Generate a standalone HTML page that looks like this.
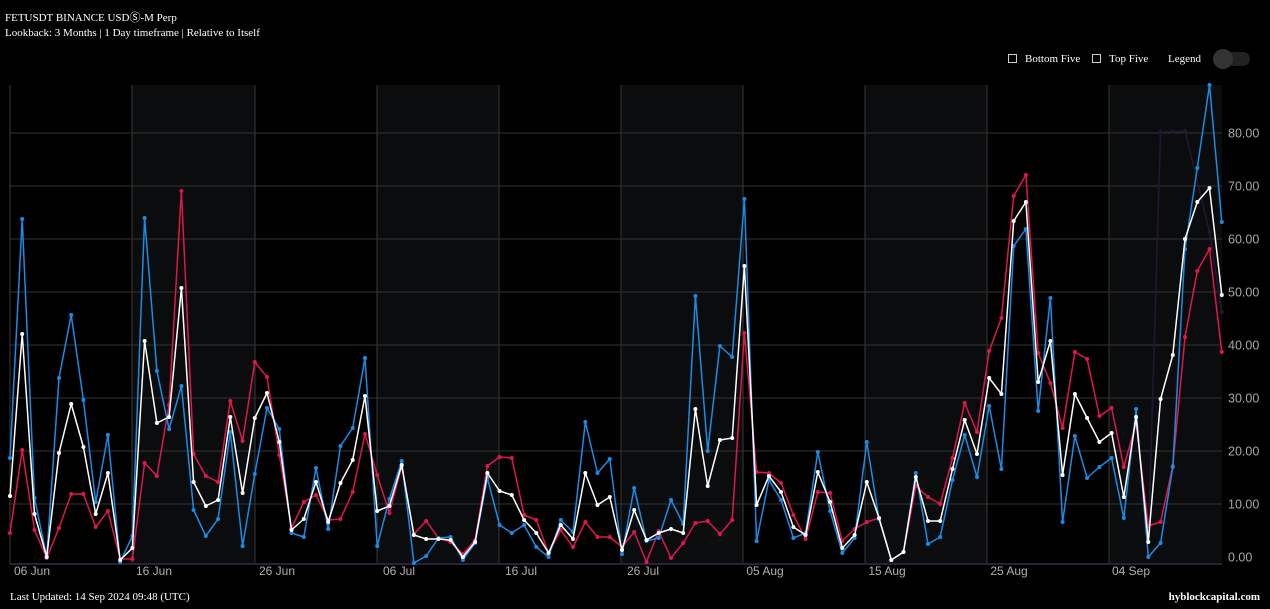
<!DOCTYPE html>
<html><head><meta charset="utf-8"><style>
html,body{margin:0;padding:0;background:#000;width:1270px;height:609px;overflow:hidden}
.t{position:absolute;color:#fff;font-family:"Liberation Serif",serif;font-size:11px;white-space:nowrap}
svg{position:absolute;left:0;top:0}
</style></head><body>
<div class="t" style="left:5px;top:9px">FETUSDT BINANCE USDⓈ-M Perp</div>
<div class="t" style="left:5px;top:27px">Lookback: 3 Months | 1 Day timeframe | Relative to Itself</div>
<div class="t" style="left:1008px;top:53px"><span style="display:inline-block;width:7px;height:7px;border:1px solid #ccc;vertical-align:-1px;margin-right:8px"></span>Bottom Five</div>
<div class="t" style="left:1092px;top:53px"><span style="display:inline-block;width:7px;height:7px;border:1px solid #ccc;vertical-align:-1px;margin-right:8px"></span>Top Five</div>
<div class="t" style="left:1168px;top:53px">Legend</div>
<div style="position:absolute;left:1214px;top:52px;width:36px;height:14px;border-radius:7px;background:#222"></div>
<div style="position:absolute;left:1213px;top:49px;width:20px;height:20px;border-radius:10px;background:#333"></div>
<div class="t" style="left:10px;top:591px">Last Updated: 14 Sep 2024 09:48 (UTC)</div>
<div class="t" style="right:10px;top:591px;font-weight:bold">hyblockcapital.com</div>
<svg id="s" width="1270" height="609" xmlns="http://www.w3.org/2000/svg"></svg>
<script>
var B=[458,219,498,557,378,315,400,502,435,562,536,218,371,429,386,510,536,519,432,546,474,408,429,533,537,468,529,446,428,358,546,499,461,563,556,538,537,560,543,478,525,533,525,547,557,520,532,422,473,459,554,488,541,538,500,524,296,451,346,357,199,541,480,500,538,533,452,511,553,538,442,519,560,552,473,544,537,480,435,477,406,469,246,229,411,298,522,436,478,467,458,518,409,557,543,467,249,168,85,222];
var W=[496,334,514,557,453,404,447,514,473,560,548,341,423,417,288,482,506,500,417,493,418,393,442,530,519,482,522,483,460,396,511,506,465,535,539,539,540,557,542,473,491,495,520,533,553,525,539,473,505,497,550,510,540,533,529,533,409,486,440,438,266,505,476,492,527,535,472,502,548,535,482,518,560,552,477,521,521,469,420,454,378,394,221,202,382,341,475,394,418,442,433,497,417,542,399,355,239,202,188,295];
var R=[533,450,530,558,528,494,494,527,511,559,559,463,476,405,191,454,476,482,401,441,362,377,455,528,502,495,520,519,492,434,475,513,466,534,521,538,542,554,540,466,457,458,515,520,553,530,547,522,537,537,547,532,562,531,558,543,523,521,534,520,333,472,473,483,515,539,492,493,541,529,522,518,560,552,486,497,504,458,403,432,351,318,196,175,353,383,428,352,359,416,408,467,423,526,522,466,337,271,249,352];
function X(i){return 10+i*12.24}
var h='';
var gx=[10,132,255,377,499,621,743,865,987,1109,1222];
for(var k=0;k<gx.length-1;k++){h+='<rect x="'+gx[k]+'" y="85" width="'+(gx[k+1]-gx[k])+'" height="479" fill="'+(k%2?'#0b0c0d':'#000')+'"/>';}
for(var k=1;k<gx.length-1;k++)h+='<line x1="'+gx[k]+'" y1="85" x2="'+gx[k]+'" y2="564" stroke="#3a3a3a"/>';
h+='<line x1="10" y1="85" x2="10" y2="564" stroke="#3a3a3a"/>';
var labs=['0.00','10.00','20.00','30.00','40.00','50.00','60.00','70.00','80.00'];
for(var v=0;v<9;v++){var y=557-v*53.0;if(v>0)h+='<line x1="10" y1="'+y+'" x2="1222" y2="'+y+'" stroke="#333"/>';h+='<text x="1228" y="'+(y+4.5)+'" fill="#a8a8a8" font-family="Liberation Sans" font-size="12.5">'+labs[v]+'</text>';}
h+='<line x1="10" y1="564" x2="1222" y2="564" stroke="#2a1f3d" stroke-width="2"/>';
var dl=['06 Jun','16 Jun','26 Jun','06 Jul','16 Jul','26 Jul','05 Aug','15 Aug','25 Aug','04 Sep'];
for(var k=0;k<10;k++)h+='<text x="'+(gx[k]+22)+'" y="575" text-anchor="middle" fill="#b0b0b0" font-family="Liberation Sans" font-size="12">'+dl[k]+'</text>';
h+='<polyline points="'+X(93)+',542 '+X(94)+',132 '+X(95)+',132 '+X(96)+',131 '+X(98)+',232 '+X(99)+',312" fill="none" stroke="#221834" stroke-width="1.5"/>';
[[94,132],[95,132],[96,131],[98,232],[99,312]].forEach(function(p){h+='<circle cx="'+X(p[0])+'" cy="'+p[1]+'" r="2" fill="#221834"/>';});
function ser(a,c){var p=a.map(function(y,i){return X(i).toFixed(1)+','+y}).join(' ');var s='<polyline points="'+p+'" fill="none" stroke="'+c+'" stroke-width="1.5" stroke-linejoin="round"/>';a.forEach(function(y,i){s+='<circle cx="'+X(i).toFixed(1)+'" cy="'+y+'" r="2" fill="'+c+'"/>';});return s;}
h+=ser(R,'#e0174a')+ser(B,'#1a8ce6')+ser(W,'#ffffff');
document.getElementById('s').innerHTML=h;
</script>
</body></html>
